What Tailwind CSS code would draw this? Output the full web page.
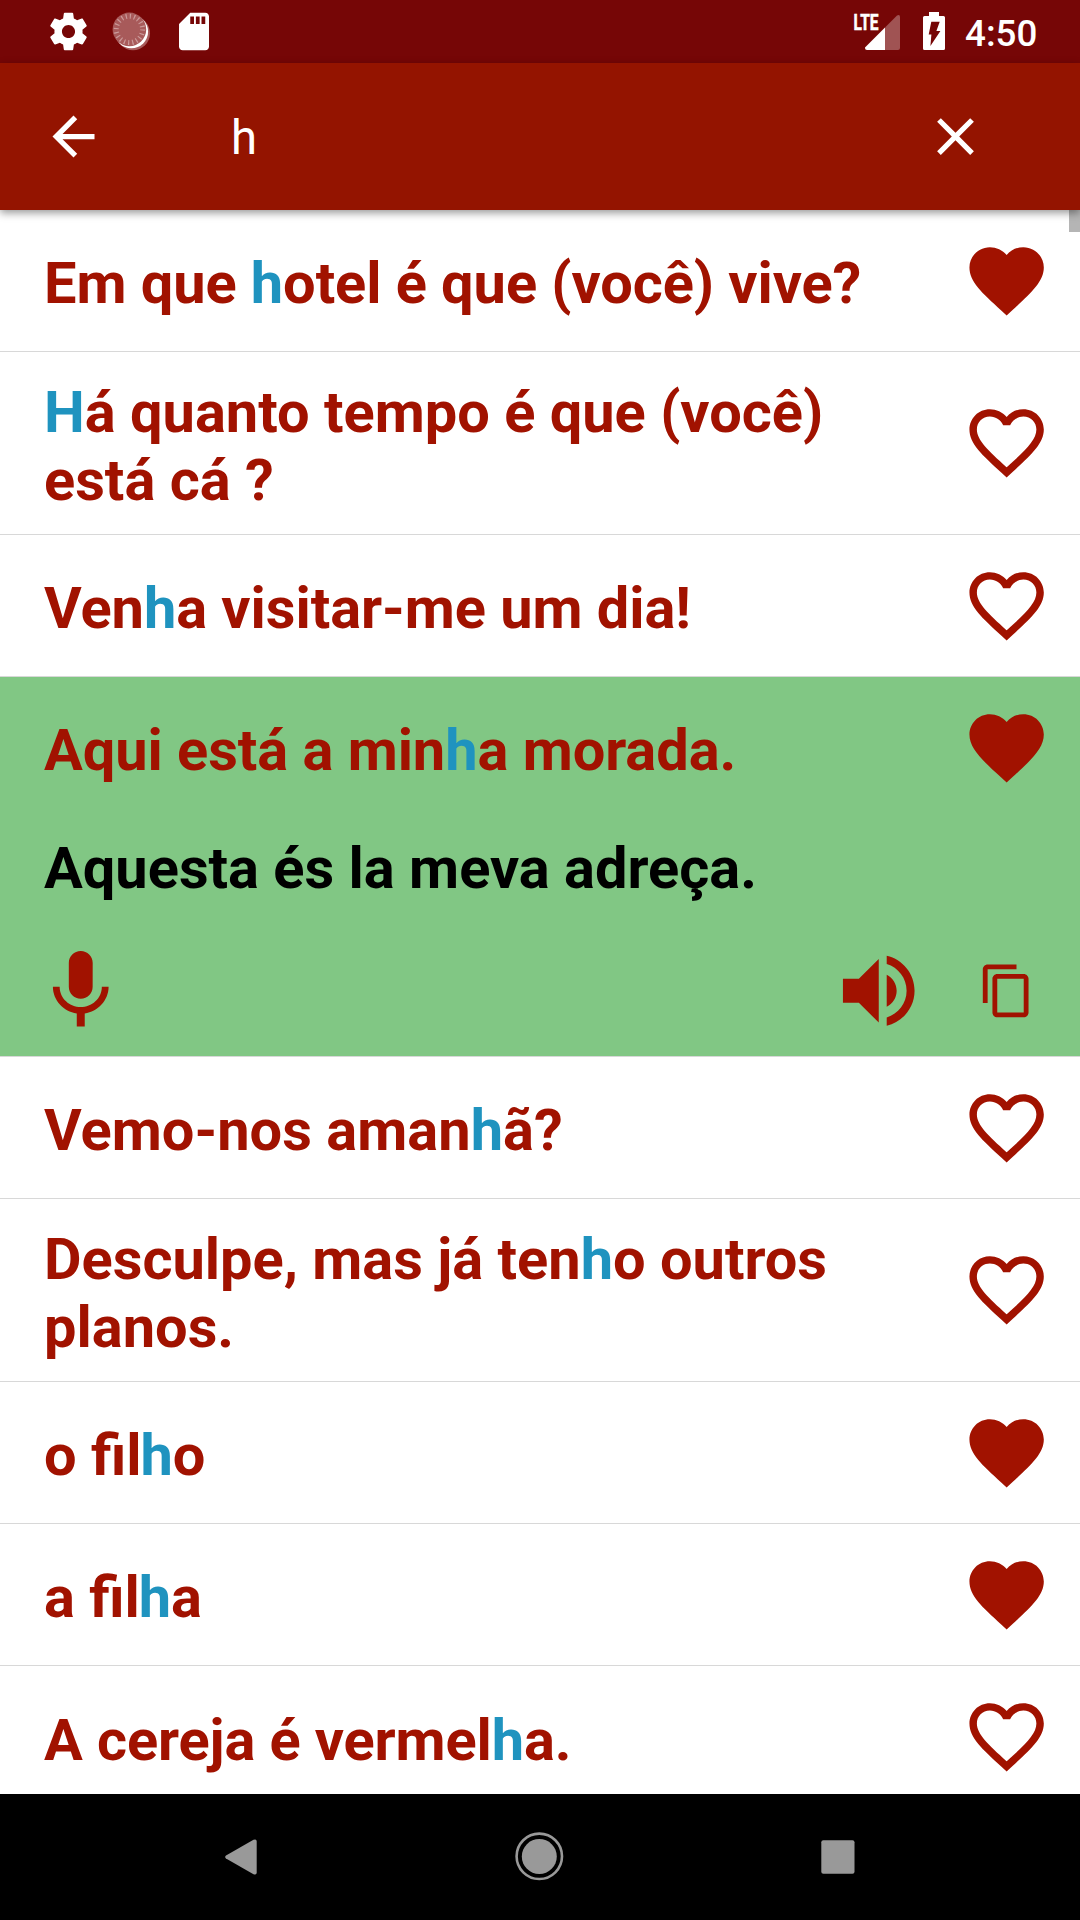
<!DOCTYPE html>
<html lang="pt">
<head>
<meta charset="utf-8">
<title>Phrases</title>
<script src="https://cdn.jsdelivr.net/npm/@tailwindcss/browser@4"></script>
</head>
<body class="bg-white">
<svg class="hidden" aria-hidden="true">
  <symbol id="fav" viewBox="0 0 24 24"><path d="M12 21.35l-1.45-1.32C5.4 15.36 2 12.28 2 8.5 2 5.42 4.42 3 7.5 3c1.74 0 3.41.81 4.5 2.09C13.09 3.81 14.76 3 16.5 3 19.58 3 22 5.42 22 8.5c0 3.78-3.4 6.86-8.55 11.54L12 21.35z"/></symbol>
  <symbol id="fav-o" viewBox="0 0 24 24"><path d="M16.5 3c-1.74 0-3.41.81-4.5 2.09C10.91 3.81 9.24 3 7.5 3 4.42 3 2 5.42 2 8.5c0 3.78 3.4 6.86 8.55 11.54L12 21.35l1.45-1.32C18.6 15.36 22 12.28 22 8.5 22 5.42 19.58 3 16.5 3zm-4.4 15.55l-.1.1-.1-.1C7.14 14.24 4 11.39 4 8.5 4 6.5 5.5 5 7.5 5c1.54 0 3.04.99 3.57 2.36h1.87C13.46 5.99 14.96 5 16.5 5c2 0 3.5 1.5 3.5 3.5 0 2.89-3.14 5.74-7.9 10.05z"/></symbol>
</svg>
<div class="w-[1080px] h-[1920px] flex flex-col overflow-hidden bg-white font-['Roboto',sans-serif]">
  <div class="h-[63px] shrink-0 bg-[#760606]">
    <svg class="block" width="1080" height="63" fill="#fff">
      <svg x="46" y="9" width="45" height="45" viewBox="0 0 24 24"><path d="M19.43 12.98c.04-.32.07-.64.07-.98s-.03-.66-.07-.98l2.11-1.65c.19-.15.24-.42.12-.64l-2-3.46c-.12-.22-.39-.3-.61-.22l-2.49 1c-.52-.4-1.08-.73-1.69-.98l-.38-2.65C14.46 2.18 14.25 2 14 2h-4c-.25 0-.46.18-.49.42l-.38 2.65c-.61.25-1.17.59-1.69.98l-2.49-1c-.23-.09-.49 0-.61.22l-2 3.46c-.13.22-.07.49.12.64l2.11 1.65c-.04.32-.07.65-.07.98s.03.66.07.98l-2.11 1.65c-.19.15-.24.42-.12.64l2 3.46c.12.22.39.3.61.22l2.49-1c.52.4 1.08.73 1.69.98l.38 2.65c.03.24.24.42.49.42h4c.25 0 .46-.18.49-.42l.38-2.65c.61-.25 1.17-.59 1.69-.98l2.49 1c.23.09.49 0 .61-.22l2-3.46c.12-.22.07-.49-.12-.64l-2.11-1.65zM12 15.5c-1.93 0-3.5-1.57-3.5-3.5s1.57-3.5 3.5-3.5 3.5 1.57 3.5 3.5-1.57 3.5-3.5 3.5z"/></svg>
      <circle cx="133" cy="33.2" r="17" fill="#a85a5a"/>
      <circle cx="131.4" cy="31.6" r="16.7"/>
      <circle cx="129.4" cy="29.4" r="16.8" fill="#a85a5a"/>
      <circle cx="129.4" cy="29.4" r="13.2" fill="none" stroke="#cb9a9a" stroke-width="5" stroke-dasharray="1.2 2.948"/>
      <svg x="171.5" y="9" width="45" height="45" viewBox="0 0 24 24"><path d="M18 2h-8L4.02 8 4 20c0 1.1.9 2 2 2h12c1.1 0 2-.9 2-2V4c0-1.1-.9-2-2-2zm-6 6h-2V4h2v4zm3 0h-2V4h2v4zm3 0h-2V4h2v4z"/></svg>
      <text x="853.5" y="30" font-size="22.5" font-weight="700" textLength="25" lengthAdjust="spacingAndGlyphs" stroke="#fff" stroke-width="0.6">LTE</text>
      <path d="M885 27.5V50H867Q865 50 865 48V47.5z"/>
      <path d="M885 27.5L897 15.5Q900 14 900 17V48Q900 50 898 50H885z" fill="#a05353"/>
      <path d="M929 12h10v4h4.5q1.5 0 1.5 1.5v31q0 1.5-1.5 1.5h-19q-1.5 0-1.500-1.500v-31q0-1.500 1.500-1.500h4.500z"/>
      <path d="M931.3 21.7h8.400l-3.300 9.300h4l-10 15 1-11.500h-2.700z" fill="#760606"/>
      <text x="965" y="46" font-size="36.75" font-weight="500">4:50</text>
    </svg>
  </div>
  <header class="relative z-10 h-[147px] shrink-0 bg-[#941400] flex items-center text-white shadow-[0_3px_8px_rgba(0,0,0,0.4)]">
    <svg class="ml-[42px] size-[63px]" viewBox="0 0 24 24" fill="#fff"><path d="M20 11H7.83l5.59-5.59L12 4l-8 8 8 8 1.41-1.41L7.83 13H20v-2z"/></svg>
    <div class="ml-[126px] pt-[2px] flex-1 text-[47.25px] leading-[56px]">h</div>
    <svg class="mr-[93px] size-[63px]" viewBox="0 0 24 24" fill="#fff"><path d="M19 6.41L17.59 5 12 10.59 6.41 5 5 6.41 10.59 12 5 17.59 6.41 19 12 13.41 17.59 19 19 17.59 13.41 12z"/></svg>
  </header>
  <main class="relative flex-1 overflow-hidden text-[#a11200] fill-[#a11200] font-bold text-[57.75px] leading-[67.7px]">
    <div class="absolute right-0 top-0 w-[11px] h-[22px] bg-[#b5b5b5]"></div>
    <div class="h-[142px] border-b border-[#d8d8d8] flex items-center justify-between pl-[44px] pr-[29px]"><p class="w-[860px] pt-[7px] tracking-[-0.07px]">Em que <span class="text-[#1f93bf]">h</span>otel é que (você) vive?</p><svg class="size-[89.25px]"><use href="#fav"/></svg></div>
    <div class="h-[183px] border-b border-[#d8d8d8] flex items-center justify-between pl-[44px] pr-[29px]"><p class="w-[860px] pt-[7px]"><span class="text-[#1f93bf]">H</span>á quanto tempo é que (você)<br>está cá ?</p><svg class="size-[89.25px]"><use href="#fav-o"/></svg></div>
    <div class="h-[142px] border-b border-[#d8d8d8] flex items-center justify-between pl-[44px] pr-[29px]"><p class="w-[860px] pt-[7px] tracking-[-0.05px]">Ven<span class="text-[#1f93bf]">h</span>a visitar-me um dia!</p><svg class="size-[89.25px]"><use href="#fav-o"/></svg></div>
    <div class="h-[380px] border-b border-[#d8d8d8] bg-[#81c784]">
      <div class="h-[141px] flex items-center justify-between pl-[44px] pr-[29px]"><p class="w-[860px] pt-[7px] tracking-[-0.05px]">Aqui está a min<span class="text-[#1f93bf]">h</span>a morada.</p><svg class="size-[89.25px]"><use href="#fav"/></svg></div>
      <p class="pl-[44px] pt-[17px] h-[125px] text-black">Aquesta és la meva adreça.</p>
      <div class="flex items-center h-[95.5px] pl-[33.4px] pr-[44px]">
        <svg class="size-[95.5px]" viewBox="0 0 24 24"><path d="M12 14c1.66 0 2.99-1.34 2.99-3L15 5c0-1.66-1.34-3-3-3S9 3.34 9 5v6c0 1.66 1.34 3 3 3zm5.3-3c0 3-2.54 5.1-5.3 5.1S6.7 14 6.7 11H5c0 3.41 2.72 6.23 6 6.72V21h2v-3.28c3.28-.48 6-3.3 6-6.72h-1.7z"/></svg>
        <svg class="ml-auto mr-[52px] size-[95.5px]" viewBox="0 0 24 24"><path d="M3 9v6h4l5 5V4L7 9H3zm13.5 3c0-1.77-1.02-3.29-2.5-4.03v8.05c1.48-.73 2.5-2.25 2.5-4.02zM14 3.23v2.06c2.89.86 5 3.54 5 6.71s-2.11 5.85-5 6.71v2.06c4.01-.91 7-4.49 7-8.77s-2.99-7.86-7-8.77z"/></svg>
        <svg class="size-[57.75px]" viewBox="0 0 24 24"><path d="M16 1H4c-1.1 0-2 .9-2 2v14h2V3h12V1zm3 4H8c-1.1 0-2 .9-2 2v14c0 1.1.9 2 2 2h11c1.1 0 2-.9 2-2V7c0-1.1-.9-2-2-2zm0 16H8V7h11v14z"/></svg>
      </div>
    </div>
    <div class="h-[142px] border-b border-[#d8d8d8] flex items-center justify-between pl-[44px] pr-[29px]"><p class="w-[860px] pt-[7px] tracking-[0.03px]">Vemo-nos aman<span class="text-[#1f93bf]">h</span>ã?</p><svg class="size-[89.25px]"><use href="#fav-o"/></svg></div>
    <div class="h-[183px] border-b border-[#d8d8d8] flex items-center justify-between pl-[44px] pr-[29px]"><p class="w-[860px] pt-[7px]">Desculpe, mas já ten<span class="text-[#1f93bf]">h</span>o outros<br>planos.</p><svg class="size-[89.25px]"><use href="#fav-o"/></svg></div>
    <div class="h-[142px] border-b border-[#d8d8d8] flex items-center justify-between pl-[44px] pr-[29px]"><p class="w-[860px] pt-[7px]">o fil<span class="text-[#1f93bf] -ml-px">h</span>o</p><svg class="size-[89.25px]"><use href="#fav"/></svg></div>
    <div class="h-[142px] border-b border-[#d8d8d8] flex items-center justify-between pl-[44px] pr-[29px]"><p class="w-[860px] pt-[7px]">a fil<span class="text-[#1f93bf] -ml-px">h</span>a</p><svg class="size-[89.25px]"><use href="#fav"/></svg></div>
    <div class="h-[142px] flex items-center justify-between pl-[44px] pr-[29px]"><p class="w-[860px] pt-[7px] tracking-[-0.12px]">A cereja é vermel<span class="text-[#1f93bf]">h</span>a.</p><svg class="size-[89.25px]"><use href="#fav-o"/></svg></div>
  </main>
  <nav class="h-[126px] shrink-0 bg-black">
    <svg class="block" width="1080" height="126" fill="#999">
      <path d="M226 61.5L253.5 45.8Q256.7 44.5 256.7 47.5V78.5Q256.7 81.5 253.5 80.2L226 64.5Q224.3 63 226 61.500z"/>
      <circle cx="539.3" cy="62.3" r="22.700" fill="none" stroke="#999" stroke-width="2.6"/>
      <circle cx="539.3" cy="62.5" r="17.5"/>
      <rect x="821.3" y="46.3" width="33.2" height="33.5" rx="2"/>
    </svg>
  </nav>
</div>
</body>
</html>
